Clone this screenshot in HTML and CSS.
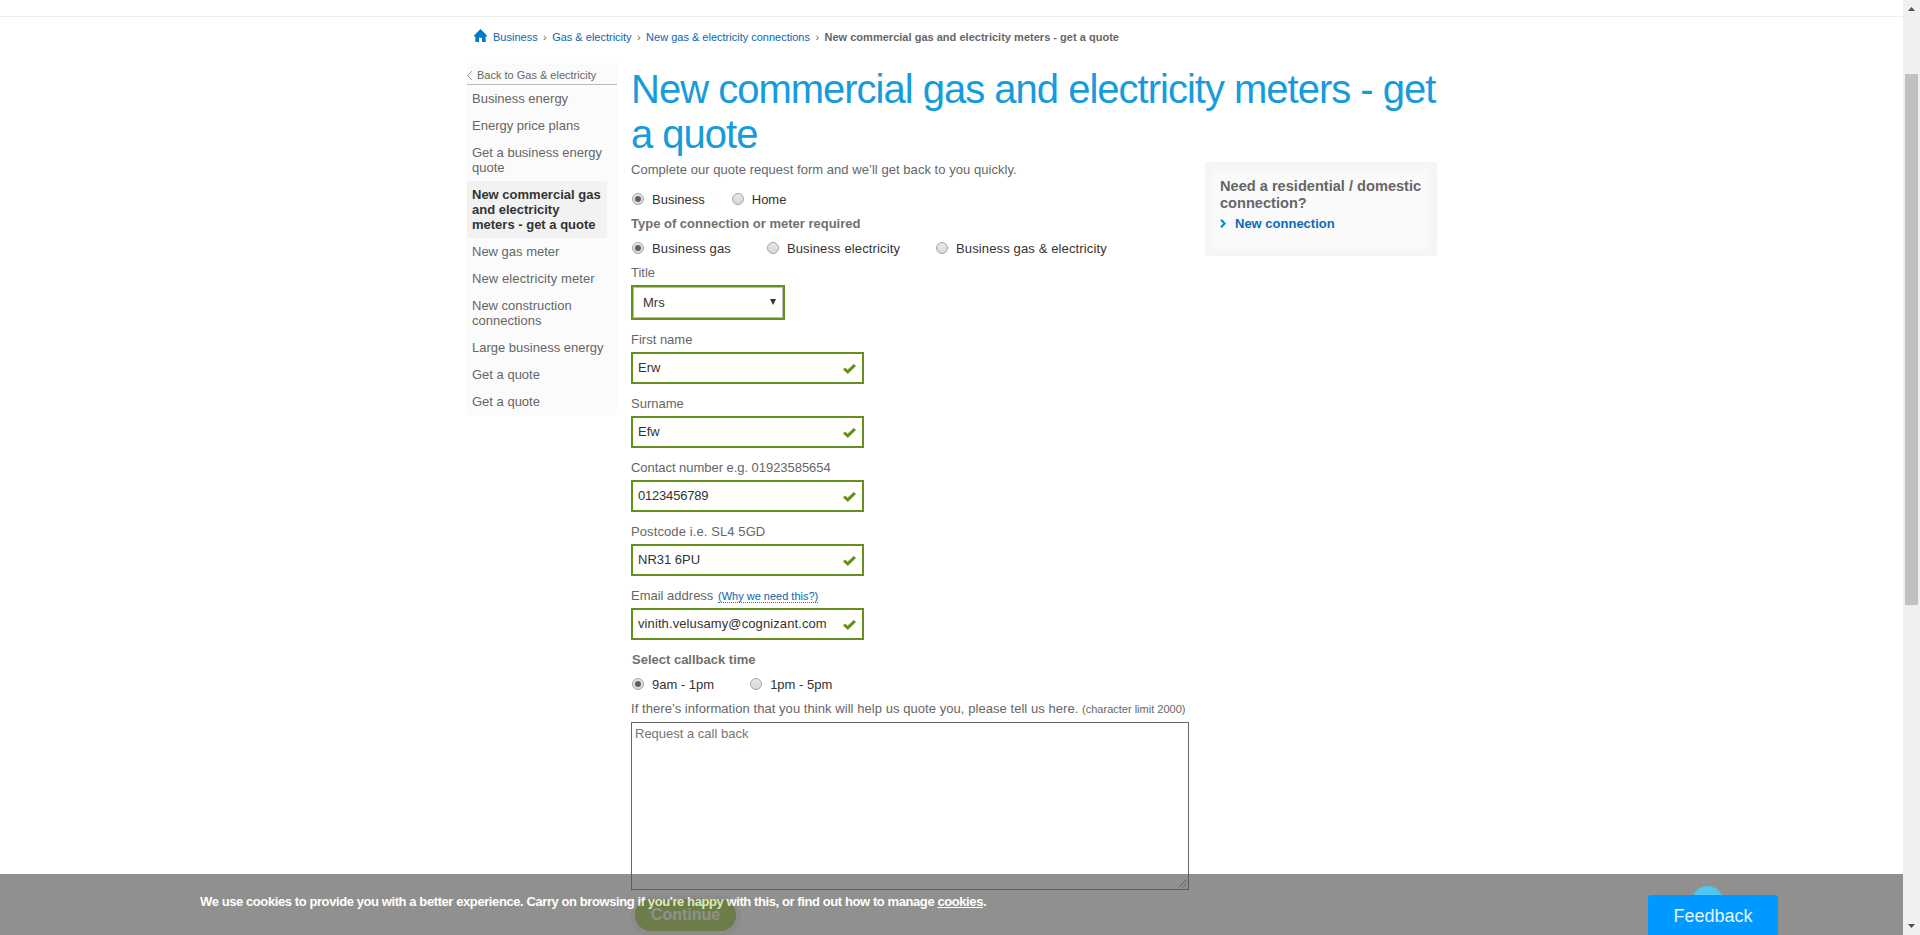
FILE: index.html
```html
<!DOCTYPE html>
<html lang="en">
<head>
<meta charset="utf-8">
<title>New commercial gas and electricity meters - get a quote</title>
<link rel="stylesheet" href="styles.css">
</head>
<body>
<svg class="sprite" width="0" height="0">
  <symbol id="tick" viewBox="0 0 13 10"><path d="M0 5.6 2 3.6 4.6 5.8 10.8 0 13 2 4.8 10Z" fill="#67901b"/></symbol>
</svg>
<div class="page">
  <header class="top"></header>
  <nav class="crumbs">
    <svg class="home" viewBox="0 0 13 13"><path d="M6.5 0 13 6.6V7.4H11.6V13H8V8.8H5V13H1.4V7.4H0V6.6Z" fill="#0079c8"/></svg>
    <a>Business</a><i>›</i><a>Gas &amp; electricity</a><i>›</i><a>New gas &amp; electricity connections</a><i>›</i><b>New commercial gas and electricity meters - get a quote</b>
  </nav>
  <div class="columns">
    <nav class="side">
      <a class="back"><svg class="chev" viewBox="0 0 5 9"><path d="M4.7.2.6 4.5l4.1 4.3" fill="none" stroke="#777" stroke-width=".8"/></svg>Back to Gas &amp; electricity</a>
      <a class="item">Business energy</a>
      <a class="item">Energy price plans</a>
      <a class="item">Get a business energy quote</a>
      <a class="item active">New commercial gas and electricity meters - get a quote</a>
      <a class="item">New gas meter</a>
      <a class="item wide">New electricity meter</a>
      <a class="item">New construction connections</a>
      <a class="item">Large business energy</a>
      <a class="item">Get a quote</a>
      <a class="item">Get a quote</a>
    </nav>
    <main class="main">
      <h1>New commercial gas and electricity meters - get a quote</h1>
      <div class="body">
        <form class="form">
          <p class="intro">Complete our quote request form and we’ll get back to you quickly.</p>
          <div class="radios r1"><label><span class="radio on"></span>Business</label><label><span class="radio"></span>Home</label></div>
          <p class="sub">Type of connection or meter required</p>
          <div class="radios r2"><label><span class="radio on"></span>Business gas</label><label><span class="radio"></span>Business electricity</label><label><span class="radio"></span>Business gas &amp; electricity</label></div>
          <p class="label">Title</p>
          <div class="select">Mrs<svg class="arrow" viewBox="0 0 6 6"><path d="M0 0h6L3 6Z" fill="#333"/></svg></div>
          <p class="label">First name</p>
          <div class="field">Erw<svg class="tick"><use href="#tick"/></svg></div>
          <p class="label">Surname</p>
          <div class="field">Efw<svg class="tick"><use href="#tick"/></svg></div>
          <p class="label digits">Contact number e.g. 01923585654</p>
          <div class="field phone">0123456789<svg class="tick"><use href="#tick"/></svg></div>
          <p class="label wide">Postcode i.e. SL4 5GD</p>
          <div class="field">NR31 6PU<svg class="tick"><use href="#tick"/></svg></div>
          <p class="label">Email address <a class="why">(Why we need this?)</a></p>
          <div class="field wide">vinith.velusamy@cognizant.com<svg class="tick"><use href="#tick"/></svg></div>
          <p class="sub callback">Select callback time</p>
          <div class="radios r3"><label><span class="radio on"></span>9am - 1pm</label><label><span class="radio"></span>1pm - 5pm</label></div>
          <p class="info">If there’s information that you think will help us quote you, please tell us here. <small>(character limit 2000)</small></p>
          <div class="area">Request a call back<svg class="grip" viewBox="0 0 9 9"><path d="M.5 8.5l8-8M4.5 8.5l4-4" stroke="#777" fill="none"/></svg></div>
          <div class="submit"><span class="continue">Continue</span></div>
        </form>
        <aside class="card">
          <h2>Need a residential / domestic connection?</h2>
          <a><svg viewBox="0 0 6 9"><path d="M1 .8 4.6 4.5 1 8.2" fill="none" stroke="#0a84cf" stroke-width="2"/></svg>New connection</a>
        </aside>
      </div>
    </main>
  </div>
</div>
<div class="cookie">We use cookies to provide you with a better experience. Carry on browsing if you're happy with this, or find out how to manage <u>cookies</u>.</div>
<div class="bubble"></div>
<div class="feedback">Feedback</div>
<div class="scrollbar">
  <svg class="sarrow" viewBox="0 0 7 4"><path d="M0 4 3.5 0 7 4Z" fill="#505050"/></svg>
  <div class="thumb"></div>
  <svg class="sarrow down" viewBox="0 0 7 4"><path d="M0 0 3.5 4 7 0Z" fill="#505050"/></svg>
</div>
</body>
</html>
```

FILE: styles.css
```css
* { box-sizing: border-box; }
body { margin: 0; height: 935px; overflow: hidden; background: #fff; color: #666; font: 13px/15px "Liberation Sans", Arial, sans-serif; }
h1, h2, p { margin: 0; }
.sprite { position: absolute; }
.page { width: 1903px; height: 935px; overflow: hidden; }
.top { height: 17px; border-bottom: 1px solid #eee; }
.crumbs { display: flex; align-items: center; height: 13px; margin: 14px 0 0 474px; font-size: 11px; line-height: 13px; white-space: nowrap; color: #666; }
.crumbs a { color: #0b64b0; }
.crumbs b { letter-spacing: .02px; }
.crumbs i { font-style: normal; width: 14.5px; text-align: center; }
.home { width: 13px; height: 13px; margin: -4px 6px 0 0; }
.columns { display: flex; align-items: flex-start; gap: 14px; margin: 19px 0 0 467px; }
.side { width: 150px; background: #fbfbfb; display: flex; flex-direction: column; }
.back { height: 22px; padding-top: 4px; display: flex; align-items: center; gap: 5px; border-bottom: 1px solid #bbb; font-size: 11px; line-height: 13px; }
.chev { width: 5px; height: 9px; }
.item { width: 140px; padding: 6px 0 6px 5px; }
.active { padding-right: 5px; background: #f2f2f2; color: #333; font-weight: bold; }
.wide { letter-spacing: .1px; }
.digits { letter-spacing: -.04px; }
.phone { letter-spacing: -.2px; }
.main { width: 808px; padding-top: 4px; }
h1 { font-size: 40px; line-height: 45px; letter-spacing: -1px; font-weight: normal; color: #169bdd; }
.body { display: flex; align-items: flex-start; gap: 16px; padding-top: 5px; }
.form { width: 558px; white-space: nowrap; }
.intro { letter-spacing: .045px; }
.sub { font-weight: bold; color: #707070; }
.radios { display: flex; color: #333; }
.radios label { display: flex; align-items: center; }
.radio { width: 12px; height: 12px; margin: -1px 8px 0 1px; border: 1px solid #a6a6a6; border-radius: 50%; background: linear-gradient(#e8e8e8, #d8d8d8); display: flex; align-items: center; justify-content: center; }
.on::before { content: ""; width: 6px; height: 6px; border-radius: 50%; background: #606060; }
.r1 { padding: 15px 0 9px; gap: 26px; }
.r2 { padding: 10px 0 9px; gap: 35px; letter-spacing: .13px; }
.r3 { padding: 10px 0 9px; gap: 35px; }
.select { position: relative; width: 154px; height: 35px; margin: 5px 0 12px; border: 2px solid #67901b; padding: 8px 10px; color: #333; box-shadow: inset 0 0 0 1px #bbb; }
.arrow { position: absolute; right: 7px; top: 12px; width: 6px; height: 6px; }
.field { position: relative; width: 233px; height: 32px; margin: 5px 0 12px; border: 2px solid #67901b; padding: 6px 5px; color: #333; }
.tick { position: absolute; right: 6px; top: 10px; width: 13px; height: 10px; }
.why { margin-left: 1px; font-size: 11px; color: #0b64b0; border-bottom: 1px dotted #0b84d0; line-height: 12px; }
.callback { padding-left: 1px; }
.info { letter-spacing: .057px; }
.info small { font-size: 11px; letter-spacing: 0; }
.area { position: relative; height: 168px; margin-top: 5px; border: 1px solid #666; padding: 3px; color: #757575; }
.grip { position: absolute; right: 1px; bottom: 1px; width: 9px; height: 9px; }
.submit { width: 110px; height: 42px; margin-top: 5px; padding: 4px; border-radius: 21px; background: #f2f2f2; }
.continue { display: block; width: 101px; height: 32px; border-radius: 16px; background: #94c832; box-shadow: inset 0 0 8px #86b52c; color: #fff; font-weight: bold; font-size: 16px; line-height: 32px; text-align: center; }
.card { width: 232px; height: 94px; padding: 16px 10px 0 15px; border-radius: 3px; background: #fafafa; box-shadow: inset 0 0 10px 6px #f4f4f4; }
.card h2 { font-size: 14.6px; line-height: 17px; color: #666; white-space: normal; }
.card a { display: flex; align-items: center; gap: 9px; margin-top: 4px; font-weight: bold; color: #0b6cb8; }
.card svg { width: 6px; height: 9px; }
.cookie { position: absolute; left: 0; top: 874px; width: 1903px; height: 61px; padding: 20px 0 0 200px; background: #5b5a57; opacity: .67; color: #fff; font-weight: bold; letter-spacing: -.41px; white-space: nowrap; }
.bubble { position: absolute; left: 1692px; top: 886px; width: 31px; height: 31px; border-radius: 50%; background: #4ec5f2; }
.feedback { position: absolute; left: 1648px; top: 895px; width: 130px; height: 40px; border-radius: 3px 3px 0 0; background: #09f; color: #e6f5ff; font-size: 18px; line-height: 42px; text-align: center; }
.scrollbar { position: absolute; right: 0; top: 0; width: 17px; height: 935px; background: #f0f0f0; display: flex; flex-direction: column; align-items: center; padding: 7px 0; }
.sarrow { width: 7px; height: 4px; }
.thumb { width: 13px; height: 531px; margin-top: 63px; background: #c1c1c1; }
.down { margin-top: auto; }
```
